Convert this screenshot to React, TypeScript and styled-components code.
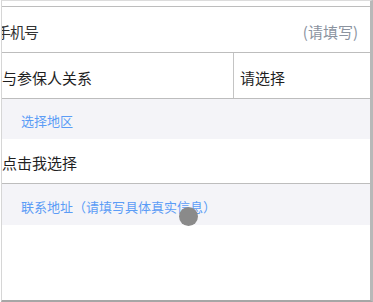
import React from "react";
import styled, { createGlobalStyle } from "styled-components";

const GlobalStyle = createGlobalStyle`
  html, body {
    margin: 0;
    padding: 0;
    background: #ffffff;
  }
  body {
    font-family: "Noto Sans CJK SC", "Noto Sans", sans-serif;
  }
`;

const Screen = styled.div`
  position: relative;
  box-sizing: border-box;
  width: 372px;
  height: 302px;
  margin-left: 1px;
  padding-top: 5px;
  border-top: 1px solid #dcdcdc;
  border-left: 1px solid #d6d6d6;
  border-right: 3px solid #b8b8b8;
  border-bottom: 2px solid #a6a6a6;
  background: #ffffff;
  overflow: hidden;
`;

const List = styled.div`
  border-top: 1px solid #bdbdbd;
`;

const Row = styled.div<{ $height: number; $line?: boolean }>`
  display: flex;
  align-items: center;
  box-sizing: border-box;
  height: ${(p) => p.$height}px;
  padding: 3px 0 0 0;
  border-bottom: ${(p) => (p.$line ? "1px solid #bdbdbd" : "none")};
  font-size: 15px;
  color: #1f1f1f;
`;

const Clip = styled.div`
  flex: 1;
  overflow: hidden;
  white-space: nowrap;
`;

const PhoneLabel = styled.span`
  display: inline-block;
  margin-left: -6px;
  color: #333;
  letter-spacing: -1px;
`;

const Placeholder = styled.span`
  margin-right: 12px;
  color: #8b939f;
  font-size: 15px;
`;

const Cell = styled.div<{ $width?: number }>`
  display: flex;
  align-items: center;
  box-sizing: border-box;
  height: 100%;
  ${(p) => (p.$width ? `width: ${p.$width}px;` : "flex: 1;")}
  padding-left: ${(p) => (p.$width ? 0 : 6)}px;
  border-right: ${(p) => (p.$width ? "1px solid #c4c4c4" : "none")};
`;

const SplitRow = styled.div`
  display: flex;
  height: 45px;
  border-bottom: 1px solid #bdbdbd;
  font-size: 15px;
  color: #1f1f1f;
  & > div {
    padding-top: 3px;
  }
`;

const Section = styled.div<{ $height: number }>`
  display: flex;
  align-items: center;
  box-sizing: border-box;
  height: ${(p) => p.$height}px;
  padding: 3px 0 0 19px;
  background: #f4f4f8;
  color: #5b9cf6;
  font-size: 13px;
`;

const Touch = styled.div`
  position: absolute;
  left: 177px;
  top: 206px;
  width: 19px;
  height: 19px;
  border-radius: 50%;
  background: #8a8a8a;
`;

const App: React.FC = () => {
  return (
    <>
      <GlobalStyle />
      <Screen>
        <List>
          <Row $height={46} $line>
            <Clip>
              <PhoneLabel>手机号</PhoneLabel>
            </Clip>
            <Placeholder>(请填写)</Placeholder>
          </Row>
          <SplitRow>
            <Cell $width={232}>与参保人关系</Cell>
            <Cell>请选择</Cell>
          </SplitRow>
          <Section $height={40}>选择地区</Section>
          <Row $height={45} $line>
            点击我选择
          </Row>
          <Section $height={41}>联系地址（请填写具体真实信息）</Section>
        </List>
        <Touch />
      </Screen>
    </>
  );
};

export default App;
